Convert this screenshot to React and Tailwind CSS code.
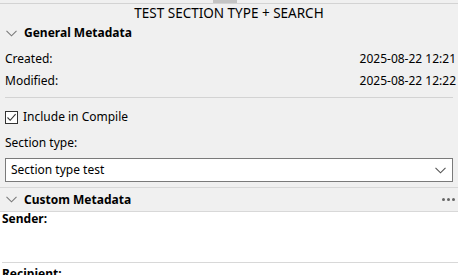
const font = { fontFamily: '"Noto Sans", "Segoe UI", sans-serif' }

function Chevron({ className }) {
  return (
    <svg width="11" height="7" viewBox="0 0 11 7" className={className}>
      <path d="M0.5 0.8 L5.5 5.8 L10.5 0.8" fill="none" stroke="currentColor" strokeWidth="1.1" />
    </svg>
  )
}

export default function App() {
  return (
    <div className="w-[458px] h-[275px] overflow-hidden bg-[#f0f0f0] text-[12px] text-black" style={font}>
      <div className="relative h-[4px] border-b border-[#d3d3d3]">
        <div className="absolute left-[213px] top-0 h-[3px] w-[24px] bg-[#c4c4c4]" />
      </div>
      <div className="h-[20px] flex items-center justify-center text-[13.5px] leading-none">
        TEST SECTION TYPE + SEARCH
      </div>
      <div className="h-[18px] flex items-center pl-[6px]">
        <Chevron className="text-[#7a7a7a]" />
        <span className="ml-[7px] font-bold">General Metadata</span>
      </div>
      <div className="px-[5px] pt-[6px]">
        <div className="h-[22px] flex items-center justify-between">
          <span>Created:</span>
          <span className="mr-[-3px]">2025-08-22 12:21</span>
        </div>
        <div className="h-[22px] flex items-center justify-between">
          <span>Modified:</span>
          <span className="mr-[-3px]">2025-08-22 12:22</span>
        </div>
        <div className="mt-[5px] border-t border-[#d3d3d3]" />
        <div className="h-[38px] flex items-center">
          <span className="w-[13px] h-[13px] border border-[#333] bg-white flex items-center justify-center">
            <svg width="11" height="11" viewBox="0 0 11 11">
              <path d="M1.5 5.5 L4.2 8.3 L9.6 2.2" fill="none" stroke="#333" strokeWidth="1.1" />
            </svg>
          </span>
          <span className="ml-[5px]">Include in Compile</span>
        </div>
        <div className="h-[14px] flex items-center">Section type:</div>
        <div className="mt-[8px] h-[24px] border border-[#7a7a7a] bg-white flex items-center justify-between pl-[5px] pr-[6px]">
          <span>Section type test</span>
          <Chevron className="text-[#555]" />
        </div>
      </div>
      <div className="mt-[5px] h-[25px] border-y border-[#d8d8d8] flex items-center pl-[6px] pr-[3px]">
        <Chevron className="text-[#7a7a7a]" />
        <span className="ml-[7px] font-bold">Custom Metadata</span>
        <span className="ml-auto flex gap-[2px]">
          <span className="w-[3px] h-[3px] rounded-full bg-[#666]" />
          <span className="w-[3px] h-[3px] rounded-full bg-[#666]" />
          <span className="w-[3px] h-[3px] rounded-full bg-[#666]" />
        </span>
      </div>
      <div className="bg-white h-[100px] pl-[2px]">
        <div className="h-[51px] border-b border-[#d8d8d8] font-bold leading-[13px]">Sender:</div>
        <div className="font-bold pt-[2px]">Recipient:</div>
      </div>
    </div>
  )
}
